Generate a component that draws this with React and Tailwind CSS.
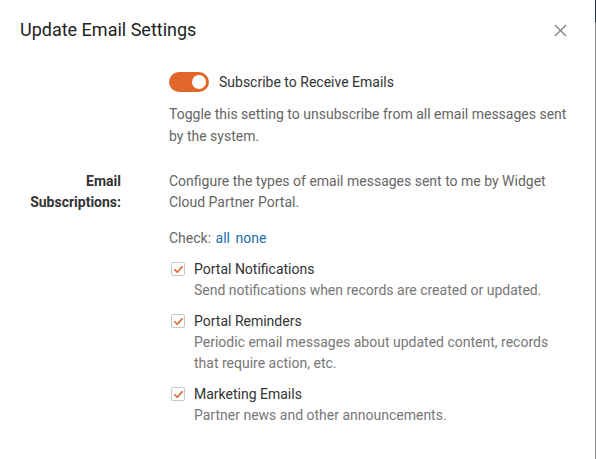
function Check() {
  return (
    <span className="mt-[3px] flex h-[14px] w-[14px] shrink-0 items-center justify-center rounded-[2px] border border-[#c8c8c8] bg-white">
      <svg viewBox="0 0 12 12" className="h-[11px] w-[11px]">
        <path d="M2 6.3 4.7 9 10 3" fill="none" stroke="#e0662a" strokeWidth="1.8" strokeLinecap="round" strokeLinejoin="round" />
      </svg>
    </span>
  );
}

const items = [
  { title: 'Portal Notifications', desc: 'Send notifications when records are created or updated.' },
  { title: 'Portal Reminders', desc: 'Periodic email messages about updated content, records that require action, etc.' },
  { title: 'Marketing Emails', desc: 'Partner news and other announcements.' },
];

export default function App() {
  return (
    <div className="flex h-[459px] w-[596px] bg-white font-['Roboto',sans-serif] text-[14px] leading-[21px] text-[#333]">
      <div className="flex-1">
        <div className="flex items-center justify-between pl-5 pr-[28px] pt-[19px]">
          <h1 className="text-[18px] leading-[22px] text-[#222]">Update Email Settings</h1>
          <svg viewBox="0 0 14 14" className="h-[13px] w-[13px]">
            <path d="M1 1 13 13M13 1 1 13" stroke="#8a8a8a" strokeWidth="1.6" />
          </svg>
        </div>

        <div className="mt-[30px] flex">
          <div className="w-[169px] shrink-0" />
          <div className="w-[405px]">
            <div className="flex h-[22px] items-center gap-[10px]">
              <span className="flex h-[20px] w-[40px] items-center justify-end rounded-full bg-[#e0662a] pr-[3px]">
                <span className="h-[14px] w-[14px] rounded-full bg-white" />
              </span>
              <span className="pt-[1px]">Subscribe to Receive Emails</span>
            </div>
            <p className="mt-[10px] leading-[22px] text-[#666]">
              Toggle this setting to unsubscribe from all email messages sent by the system.
            </p>
          </div>
        </div>

        <div className="mt-[24px] flex">
          <div className="w-[121px] shrink-0 text-right font-bold text-[#333]">
            Email
            <br />
            Subscriptions:
          </div>
          <div className="ml-[48px] w-[400px] text-[#666]">
            <p>Configure the types of email messages sent to me by Widget Cloud Partner Portal.</p>
            <p className="mt-[15px]">
              Check: <a className="ml-[1px] text-[#1a6fb0]">all</a> <a className="ml-[2px] text-[#1a6fb0]">none</a>
            </p>
            <div className="mt-[10px] flex flex-col gap-[10px]">
              {items.map((it) => (
                <div key={it.title} className="flex gap-[9px] pl-[2px]">
                  <Check />
                  <div>
                    <div className="text-[#333]">{it.title}</div>
                    <div className="text-[#777]">{it.desc}</div>
                  </div>
                </div>
              ))}
            </div>
          </div>
        </div>
      </div>
      <div className="flex w-px flex-col">
        <div className="h-[22px] bg-[#1c2e45]" />
        <div className="flex-1 bg-[#8a8a8a]" />
      </div>
    </div>
  );
}
